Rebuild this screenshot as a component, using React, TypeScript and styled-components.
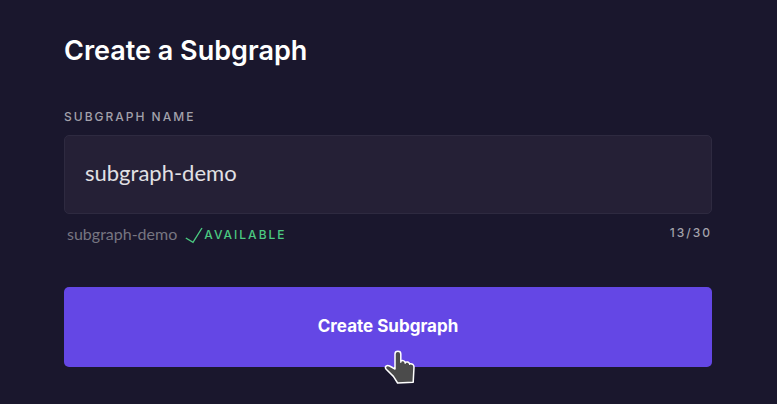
import React, { useState } from "react";
import styled, { createGlobalStyle } from "styled-components";

const GlobalStyle = createGlobalStyle`
  *, *::before, *::after {
    box-sizing: border-box;
  }
  body {
    margin: 0;
    background: #1a172d;
    color: #ffffff;
    font-family: Inter, sans-serif;
  }
`;

const Page = styled.main`
  padding: 33px 65px 36px 64px;
`;

const Title = styled.h1`
  margin: 0;
  font-size: 27px;
  line-height: 36px;
  font-weight: 600;
`;

const Form = styled.form`
  display: flex;
  flex-direction: column;
  margin-top: 40px;
`;

const Label = styled.label`
  font-size: 12px;
  line-height: 16px;
  font-weight: 500;
  letter-spacing: 2px;
  text-transform: uppercase;
  color: #a3a2ab;
`;

const NameInput = styled.input`
  width: 100%;
  height: 79px;
  margin-top: 10px;
  padding: 0 20px 4px;
  border: 1px solid #2e2a40;
  border-radius: 5px;
  outline: none;
  background: #252036;
  color: #e1e0e4;
  font-family: Lato, sans-serif;
  font-size: 22px;
`;

const StatusRow = styled.div`
  display: flex;
  justify-content: space-between;
  margin-top: 9px;
  padding-left: 3px;
`;

const Status = styled.div`
  display: flex;
  align-items: center;
  height: 24px;
`;

const Slug = styled.span`
  padding-bottom: 2px;
  font-family: Lato, sans-serif;
  font-size: 16px;
  line-height: 20px;
  color: #777581;
`;

const Check = styled.svg`
  width: 18px;
  height: 18px;
  margin: 0 1px 0 8px;
`;

const Available = styled.span`
  font-size: 12px;
  line-height: 16px;
  font-weight: 500;
  letter-spacing: 2px;
  text-transform: uppercase;
  color: #4bca81;
`;

const Counter = styled.span`
  font-size: 12px;
  line-height: 20px;
  font-weight: 500;
  letter-spacing: 2px;
  color: #a3a2ab;
`;

const Action = styled.div`
  position: relative;
  margin-top: 40px;
`;

const SubmitButton = styled.button`
  display: block;
  width: 100%;
  height: 80px;
  padding: 0 0 2px;
  border: 0;
  border-radius: 5px;
  background: #6447e5;
  color: #ffffff;
  font-family: inherit;
  font-size: 17px;
  font-weight: 700;
`;

const Pointer = styled.svg`
  position: absolute;
  top: 62px;
  left: calc(50% - 6px);
  width: 36px;
  height: 36px;
  pointer-events: none;
`;

const MAX_LENGTH = 30;

export default function App() {
  const [name, setName] = useState("subgraph-demo");

  return (
    <>
      <GlobalStyle />
      <Page>
        <Title>Create a Subgraph</Title>
        <Form onSubmit={(event) => event.preventDefault()}>
          <Label htmlFor="subgraph-name">Subgraph name</Label>
          <NameInput
            id="subgraph-name"
            type="text"
            value={name}
            maxLength={MAX_LENGTH}
            spellCheck={false}
            autoComplete="off"
            onChange={(event) => setName(event.target.value)}
          />
          <StatusRow>
            <Status>
              <Slug>{name}</Slug>
              <Check viewBox="0 0 18 18" fill="none" aria-hidden="true">
                <path d="M0.8 12L8 16.3L17 2" stroke="#4bca81" strokeWidth="1.4" />
              </Check>
              <Available>Available</Available>
            </Status>
            <Counter>
              {name.length}/{MAX_LENGTH}
            </Counter>
          </StatusRow>
          <Action>
            <SubmitButton type="submit">Create Subgraph</SubmitButton>
            <Pointer viewBox="0 0 36 36" aria-hidden="true">
              <path
                d="M13 5C13 1.4 18.8 1.4 18.8 5V12.3C20 11 22.4 11.4 23.2 13.4C25 12.4 26.8 13 27.6 14.8C30.2 14.2 32 15.6 32 18L31.2 33.3L15.6 34L11.4 27.4L4.2 20.3C2 17.4 5 15.8 7.6 17L13 20Z"
                fill="#4b4b4b"
                stroke="#ffffff"
                strokeWidth="1.5"
                strokeLinejoin="round"
              />
              <path d="M18.8 12.3V14M23.2 13.4V15M27.6 14.8V16" stroke="#ffffff" strokeWidth="1" />
            </Pointer>
          </Action>
        </Form>
      </Page>
    </>
  );
}
